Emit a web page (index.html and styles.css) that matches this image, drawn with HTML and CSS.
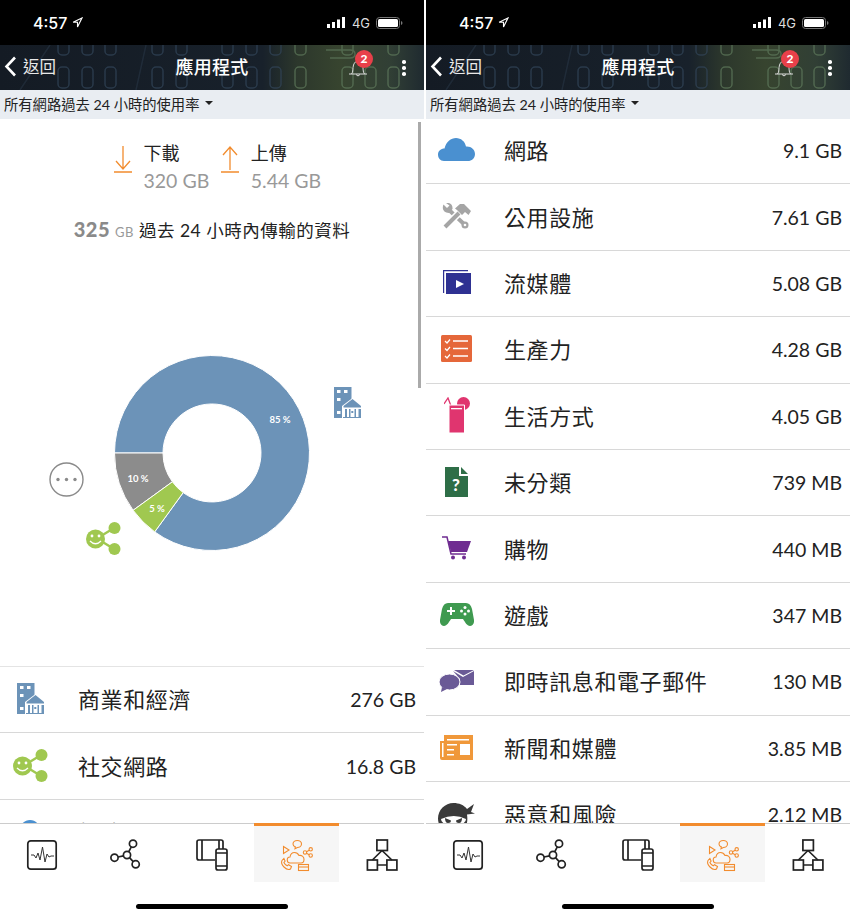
FILE: index.html
```html
<!DOCTYPE html>
<html lang="zh-Hant">
<head>
    <meta charset="UTF-8">
    <meta name="viewport" content="width=device-width, initial-scale=1.0">
    <title>應用程式</title>
    <link rel="stylesheet" href="styles.css">
</head>
<body>
    <!-- shared icons -->
    <svg class="sprite" xmlns="http://www.w3.org/2000/svg">
        <symbol id="circuit" viewBox="0 0 424 45">
            <g fill="none" stroke="#33465a" stroke-width="1.500" opacity=".7">
                <rect x="58" y="-10" width="11" height="20" rx="4"/><rect x="82" y="-10" width="11" height="20" rx="4"/><rect x="105" y="-10" width="11" height="20" rx="4"/>
                <rect x="58" y="22" width="11" height="21" rx="4"/><rect x="82" y="22" width="11" height="21" rx="4"/><rect x="105" y="22" width="11" height="21" rx="4"/>
                <rect x="152" y="-10" width="11" height="20" rx="4"/><rect x="176" y="-10" width="11" height="20" rx="4"/><rect x="222" y="-10" width="11" height="20" rx="4"/><rect x="246" y="-10" width="11" height="20" rx="4"/><rect x="270" y="-10" width="11" height="20" rx="4"/>
                <rect x="152" y="22" width="11" height="21" rx="4"/><rect x="176" y="22" width="11" height="21" rx="4"/><rect x="222" y="22" width="11" height="21" rx="4"/><rect x="246" y="22" width="11" height="21" rx="4"/><rect x="270" y="22" width="11" height="21" rx="4"/>
                <path d="M20 45l30-45M136 45l10-45" opacity=".5"/>
            </g>
            <g fill="none" stroke="#5f7a5c" stroke-width="1.500" opacity=".7">
                <rect x="295" y="-10" width="11" height="20" rx="4"/><rect x="342" y="-10" width="11" height="20" rx="4"/><rect x="388" y="-10" width="11" height="20" rx="4"/>
                <rect x="295" y="22" width="11" height="21" rx="4"/><rect x="342" y="22" width="11" height="21" rx="4"/><rect x="365" y="22" width="11" height="21" rx="4"/><rect x="388" y="22" width="11" height="21" rx="4"/>
                <path d="M326 5h24q5 0 5 4t-5 4h-20"/>
            </g>
        </symbol>
        <symbol id="ic-building" viewBox="0 0 28 31">
            <path fill="#6c93b8" d="M0 0h17.500v31H0z"/>
            <path fill="#fff" d="M3 3h3.500v3H3zM10 3h3.500v3H10zM3 11h3.500v3H3zM3 24h3.500v3H3z"/>
            <path fill="#fff" d="M8 31V19l10.500-8L28 19v12z"/>
            <path fill="#6c93b8" d="M9.500 19l9-7 8.500 7v1.500H9.500zM11 22h2v8h-2zM15 22h1.500v8H15zM20.500 22H22v8h-1.500zM24.500 22H27v8h-2.500zM9 30h18v1H9z"/>
            <path fill="#6c93b8" d="M17.300 24h2v2h-2z"/>
        </symbol>
        <symbol id="ic-social" viewBox="0 0 35 35">
            <path stroke="#a0c850" stroke-width="2.400" d="M28 7L15 15M28 28L15 20"/>
            <circle cx="9.500" cy="18" r="9.500" fill="#a0c850"/>
            <circle cx="28.500" cy="7" r="6" fill="#a0c850"/>
            <circle cx="28.500" cy="28" r="6" fill="#a0c850"/>
            <circle cx="6" cy="15" r="1.400" fill="#fff"/>
            <circle cx="13" cy="15" r="1.400" fill="#fff"/>
            <path fill="none" stroke="#fff" stroke-width="1.300" d="M4 20q5.500 5.500 11 0"/>
        </symbol>
        <symbol id="ic-cloud" viewBox="0 0 37 23">
            <path fill="#4a90d0" d="M6 23C2 23 0 20 0 16.500 0 13 3 10.500 6.500 10.500 8 4 13 0 18 0c5 0 9 3.500 10 8.500 5-.5 9 3 9 7.500s-3.500 7-7 7z"/>
        </symbol>
        <symbol id="ic-tools" viewBox="0 0 29 26">
            <path fill="none" stroke="#a5a5a5" stroke-width="4" d="M6 6l17 16"/>
            <path fill="#a5a5a5" d="M1.500 1.500L5 5l2.500-2.500L4 0C8-1 11 2 10.500 6L7 10C2 10-.5 6 1.500 1.500z"/>
            <circle cx="23" cy="22" r="3.500" fill="#a5a5a5"/>
            <circle cx="23" cy="22" r="1.300" fill="#fff"/>
            <path fill="none" stroke="#fff" stroke-width="7" d="M4 23L17 10"/>
            <path fill="none" stroke="#a5a5a5" stroke-width="4" d="M3 24L17 10"/>
            <path fill="#a5a5a5" d="M13 5.500L18 1h4l7 7-2.500 4-3.500-3-3 3-5-5z"/>
        </symbol>
        <symbol id="ic-media" viewBox="0 0 28 24">
            <path fill="none" stroke="#2e3192" stroke-width="1.200" d="M.6 23V.6h24.400"/>
            <path fill="#2e3192" d="M3 3h25v21H3z"/>
            <path fill="#fff" d="M13 10l8 4-8 4z"/>
        </symbol>
        <symbol id="ic-tasks" viewBox="0 0 31 27">
            <rect width="31" height="27" rx="1.500" fill="#e5673a"/>
            <path fill="none" stroke="#fff" stroke-width="1.500" d="M12 6h15M12 13.500h15M12 21h15"/>
            <path fill="none" stroke="#fff" stroke-width="1.200" d="M4 6l2 2 3-3.500M4 13.500l2 2 3-3.500M4 21l2 2 3-3.500"/>
        </symbol>
        <symbol id="ic-drink" viewBox="0 0 26 36">
            <circle cx="19.500" cy="6.500" r="6.500" fill="#e0356f"/>
            <path fill="none" stroke="#e0356f" stroke-width="1.300" d="M0 7l4-6 3 8"/>
            <path fill="#e0356f" stroke="#fff" d="M5 8h15.500v28H5z"/>
            <path fill="#fff" d="M7 11h11v1.300H7z"/>
        </symbol>
        <symbol id="ic-file" viewBox="0 0 23 30">
            <path fill="#2e6e47" d="M0 0h14v9h9v21H0zM16 0l7 7h-7z"/>
            <text x="11" y="24" text-anchor="middle" class="ic-q">?</text>
        </symbol>
        <symbol id="ic-cart" viewBox="0 0 29 24">
            <path fill="none" stroke="#6f2c91" stroke-width="1.500" d="M0 1h5l4 17h15"/>
            <path fill="#6f2c91" d="M6 5h23l-4 11H9z"/>
            <circle cx="11" cy="21.500" r="2" fill="#6f2c91"/>
            <circle cx="22" cy="21.500" r="2" fill="#6f2c91"/>
        </symbol>
        <symbol id="ic-pad" viewBox="0 0 34 23">
            <path fill="#3f9a50" d="M8 0h18c3 0 5 2 6 6l2 11c.5 4-2 6-4 6-3 0-5-4-7-7H11c-2 3-4 7-7 7-2 0-4.500-2-4-6L2 6c1-4 3-6 6-6z"/>
            <path fill="#fff" d="M7 7h3V4h2v3h3v2h-3v3h-2V9H7z"/>
            <circle cx="25" cy="4.500" r="1.500" fill="#fff"/>
            <circle cx="25" cy="11" r="1.500" fill="#fff"/>
            <circle cx="21.500" cy="8" r="1.500" fill="#fff"/>
            <circle cx="28.500" cy="8" r="1.500" fill="#fff"/>
        </symbol>
        <symbol id="ic-chat" viewBox="0 0 35 22">
            <path fill="#6a5a96" d="M14 1l10 6 11-6v14H21V9zM15 0h20L24.500 5.500z"/>
            <ellipse cx="10.500" cy="12" rx="10.500" ry="8" fill="#6a5a96" stroke="#fff"/>
            <path fill="#6a5a96" d="M3 17l-1 5 6-3z"/>
        </symbol>
        <symbol id="ic-news" viewBox="0 0 33 25">
            <path fill="#f0983a" d="M0 6h4V0h29v25H2q-2 0-2-2z"/>
            <path fill="#fff" d="M7 4h22v1.500H7zM7 9h10v1.500H7zM7 14h7v1.500H7zM7 19h7v1.500H7zM20 9h10v11H20z"/>
            <path fill="#fff" d="M2 8h1.500v14H2z"/>
        </symbol>
        <symbol id="ic-ninja" viewBox="0 0 37 32">
            <path fill="#3a3a3a" d="M15.500 0C21 0 26 2 29 6l7-5-3 8 4 1.500-8 1C31 24 24 32 15.500 32 7 32 0 24 0 15.500 0 7 7 0 15.500 0z"/>
            <path fill="#fff" d="M3 16q13-6 25 0 0 6-12.500 6T3 16z"/>
            <path fill="#3a3a3a" d="M7 15l6 2.500q0 2.500-3 2.500t-3-5zM24 15l-6 2.500q0 2.500 3 2.500t3-5z"/>
        </symbol>
        <symbol id="ic-more" viewBox="0 0 35 35">
            <circle cx="17.500" cy="17.500" r="16.500" fill="none" stroke="#8a8a8a" stroke-width="1.400"/>
            <circle cx="9" cy="17.500" r="1.700" fill="#8a8a8a"/>
            <circle cx="17.500" cy="17.500" r="1.700" fill="#8a8a8a"/>
            <circle cx="26" cy="17.500" r="1.700" fill="#8a8a8a"/>
        </symbol>
        <symbol id="tab-pulse" viewBox="0 0 40 40">
            <rect x="5.800" y="5.800" width="28.400" height="28.400" rx="3" fill="none" stroke="#222" stroke-width="1.700"/>
            <path fill="none" stroke="#333" d="M9 20h3l2 3 2-5 2 7 2.500-13 2.500 15 2-8 2 3 2-1h3"/>
        </symbol>
        <symbol id="tab-net" viewBox="0 0 40 40">
            <g fill="none" stroke="#222" stroke-width="1.700">
                <circle cx="20" cy="20" r="3.600"/><circle cx="26" cy="8.700" r="3.600"/><circle cx="7.500" cy="22.700" r="3.600"/><circle cx="28.700" cy="29.300" r="3.600"/>
                <path d="M21.700 16.800l2.600-5M11 22l5.500-1.200M22.500 22.700l3.700 4"/>
            </g>
        </symbol>
        <symbol id="tab-devices" viewBox="0 0 40 40">
            <g fill="none" stroke="#222" stroke-width="1.700">
                <path d="M23 25H7q-2 0-2-2V7q0-2 2-2h22q2 0 2 2v7M10 5v20M27 5v9"/>
                <rect x="24" y="14" width="11" height="21" rx="2"/>
                <path d="M24 18h11M24 31h11"/>
            </g>
        </symbol>
        <symbol id="tab-apps" viewBox="0 0 40 40">
            <g fill="none" stroke="#f28c2e" stroke-width="1.100">
                <path d="M15 28h-1.500a3 3 0 0 1-.5-6c.5-3 2-4.500 4.500-4.500 2 0 3.500 1 4.500 3 2.500-.5 5 1 5 3.750S25.500 28 24 28z"/>
                <path d="M6.500 11.500l5.500 3.500-5.500 3.500z"/>
                <path d="M16 9c0-2 2-3.500 4.300-3.500S24.500 7 24.500 9s-2 3.500-4.200 3.500l-2.300 1.300.3-1.900C17 11.500 16 10.300 16 9z"/>
                <circle cx="28" cy="17.500" r="1.700"/><circle cx="33.700" cy="14.300" r="1.700"/><circle cx="33.700" cy="20.500" r="1.700"/>
                <path d="M29.500 16.700l2.700-1.500M29.500 18.300l2.700 1.400"/>
                <path d="M5 25.500q-1.500 3 2 6.500t6.500 2l1-2.500-3-1.800-1.300 1.100q-2.300-1.200-3.300-3.300l1.200-1.300-1.200-2.800z"/>
                <rect x="21.500" y="29.500" width="10" height="6"/>
                <path d="M21.500 32h10"/>
            </g>
        </symbol>
        <symbol id="tab-tree" viewBox="0 0 40 40">
            <g fill="none" stroke="#222" stroke-width="1.700">
                <rect x="14.900" y="5" width="10.500" height="10.500"/><rect x="5.400" y="25" width="10" height="10"/><rect x="24.900" y="25" width="10" height="10"/>
                <path d="M20 15.500L10.400 25M20 15.500L29.900 25M15.400 30h9.500"/>
            </g>
        </symbol>
    </svg>

    <div class="screens">
        <!-- left phone -->
        <section class="phone">
            <div class="status">
                <span class="clock">4:57</span>
                <svg class="loc" viewBox="0 0 10 10"><path fill="none" stroke="#fff" d="M9 1L1 4.800h4V9z"/></svg>
                <span class="status-right">
                    <svg class="signal" viewBox="0 0 19 11"><path fill="#fff" d="M0 7h3v4H0zM5 5h3v6H5zM10 2.500h3V11h-3zM15 0h3v11h-3z"/></svg>
                    <span class="net">4G</span>
                    <svg class="battery" viewBox="0 0 27 12"><rect x=".5" y=".5" width="23" height="11" rx="3" fill="none" stroke="#777"/><rect x="2" y="2" width="20" height="8" rx="1.500" fill="#fff"/><path fill="#777" d="M25 4q1.500.5 1.500 2T25 8z"/></svg>
                </span>
            </div>
            <header class="navbar">
                <svg class="circuit"><use href="#circuit"/></svg>
                <a class="back">
                    <svg class="chevron" viewBox="0 0 13 21"><path fill="none" stroke="#fff" stroke-width="2.600" d="M11 1.500L2.500 10.500l8.500 9"/></svg>
                    返回
                </a>
                <h1 class="title">應用程式</h1>
                <span class="bell">
                    <svg class="bell-icon" viewBox="0 0 18 19"><path fill="none" stroke="#ddd" d="M0 16h18M2.500 16c2-2 1-6 2-9s3-4 4.500-4 3.500 1 4.500 4 0 7 2 9M7 16.500q2 3 4 0"/></svg>
                    <span class="badge">2</span>
                </span>
                <span class="dots"><i></i><i></i><i></i></span>
            </header>
            <div class="filter">所有網路過去 24 小時的使用率<span class="caret"></span></div>
            <main class="content">
                <div class="scrollbar"></div>
                <div class="stats">
                    <div class="stat">
                        <svg class="arrow" viewBox="0 0 18 28"><path fill="none" stroke="#f28c2e" stroke-width="1.300" d="M9 1v23M2 16l7 8 7-8M0 27h18"/></svg>
                        <div class="stat-text"><div class="stat-name">下載</div><div class="stat-val">320 GB</div></div>
                    </div>
                    <div class="stat">
                        <svg class="arrow" viewBox="0 0 18 28"><path fill="none" stroke="#f28c2e" stroke-width="1.300" d="M9 2v23M2 10l7-8 7 8M0 27h18"/></svg>
                        <div class="stat-text"><div class="stat-name">上傳</div><div class="stat-val">5.44 GB</div></div>
                    </div>
                </div>
                <p class="summary"><b>325</b> <small>GB</small> 過去 24 小時內傳輸的資料</p>
                <svg class="chart" viewBox="0 0 424 416">
                    <g transform="translate(212 203)" stroke="#fff">
                        <path fill="#6c93b8" d="M-97.500 0A97.500 97.500 0 1 1-57.300 78.900L-28.800 39.600A49 49 0 1 0-49 0z"/>
                        <path fill="#8c8c8c" d="M-97.500 0A97.500 97.500 0 0 0-78.900 57.300L-39.600 28.800A49 49 0 0 1-49 0z"/>
                        <path fill="#a0c850" d="M-78.900 57.300A97.500 97.500 0 0 0-57.300 78.900L-28.800 39.600A49 49 0 0 1-39.600 28.800z"/>
                    </g>
                    <g class="pct">
                        <text x="280" y="173">85 %</text>
                        <text x="138" y="232">10 %</text>
                        <text x="157" y="262">5 %</text>
                    </g>
                    <use href="#ic-building" x="334" y="137" width="28" height="31"/>
                    <use href="#ic-more" x="49" y="212" width="35" height="35"/>
                    <use href="#ic-social" x="86" y="271" width="35" height="35"/>
                </svg>
                <ul class="list list-top">
                    <li class="row"><span class="row-icon"><svg class="i-building"><use href="#ic-building"/></svg></span><span class="row-name">商業和經濟</span><span class="row-val">276 GB</span></li>
                    <li class="row"><span class="row-icon"><svg class="i-social"><use href="#ic-social"/></svg></span><span class="row-name">社交網路</span><span class="row-val">16.8 GB</span></li>
                    <li class="row"><span class="row-icon"><svg class="i-cloud"><use href="#ic-cloud"/></svg></span><span class="row-name">網路</span><span class="row-val">9.1 GB</span></li>
                </ul>
            </main>
            <nav class="tabs">
                <a class="tab"><svg><use href="#tab-pulse"/></svg></a>
                <a class="tab"><svg><use href="#tab-net"/></svg></a>
                <a class="tab"><svg><use href="#tab-devices"/></svg></a>
                <a class="tab active"><svg><use href="#tab-apps"/></svg></a>
                <a class="tab"><svg><use href="#tab-tree"/></svg></a>
            </nav>
            <div class="home"><span></span></div>
        </section>

        <!-- right phone -->
        <section class="phone">
            <div class="status">
                <span class="clock">4:57</span>
                <svg class="loc" viewBox="0 0 10 10"><path fill="none" stroke="#fff" d="M9 1L1 4.800h4V9z"/></svg>
                <span class="status-right">
                    <svg class="signal" viewBox="0 0 19 11"><path fill="#fff" d="M0 7h3v4H0zM5 5h3v6H5zM10 2.500h3V11h-3zM15 0h3v11h-3z"/></svg>
                    <span class="net">4G</span>
                    <svg class="battery" viewBox="0 0 27 12"><rect x=".5" y=".5" width="23" height="11" rx="3" fill="none" stroke="#777"/><rect x="2" y="2" width="20" height="8" rx="1.500" fill="#fff"/><path fill="#777" d="M25 4q1.500.5 1.500 2T25 8z"/></svg>
                </span>
            </div>
            <header class="navbar">
                <svg class="circuit"><use href="#circuit"/></svg>
                <a class="back">
                    <svg class="chevron" viewBox="0 0 13 21"><path fill="none" stroke="#fff" stroke-width="2.600" d="M11 1.500L2.500 10.500l8.500 9"/></svg>
                    返回
                </a>
                <h1 class="title">應用程式</h1>
                <span class="bell">
                    <svg class="bell-icon" viewBox="0 0 18 19"><path fill="none" stroke="#ddd" d="M0 16h18M2.500 16c2-2 1-6 2-9s3-4 4.500-4 3.500 1 4.500 4 0 7 2 9M7 16.500q2 3 4 0"/></svg>
                    <span class="badge">2</span>
                </span>
                <span class="dots"><i></i><i></i><i></i></span>
            </header>
            <div class="filter">所有網路過去 24 小時的使用率<span class="caret"></span></div>
            <main class="content">
                <ul class="list list-full">
                    <li class="row"><span class="row-icon"><svg class="i-cloud"><use href="#ic-cloud"/></svg></span><span class="row-name">網路</span><span class="row-val">9.1 GB</span></li>
                    <li class="row"><span class="row-icon"><svg class="i-tools"><use href="#ic-tools"/></svg></span><span class="row-name">公用設施</span><span class="row-val">7.61 GB</span></li>
                    <li class="row"><span class="row-icon"><svg class="i-media"><use href="#ic-media"/></svg></span><span class="row-name">流媒體</span><span class="row-val">5.08 GB</span></li>
                    <li class="row"><span class="row-icon"><svg class="i-tasks"><use href="#ic-tasks"/></svg></span><span class="row-name">生產力</span><span class="row-val">4.28 GB</span></li>
                    <li class="row"><span class="row-icon"><svg class="i-drink"><use href="#ic-drink"/></svg></span><span class="row-name">生活方式</span><span class="row-val">4.05 GB</span></li>
                    <li class="row"><span class="row-icon"><svg class="i-file"><use href="#ic-file"/></svg></span><span class="row-name">未分類</span><span class="row-val">739 MB</span></li>
                    <li class="row"><span class="row-icon"><svg class="i-cart"><use href="#ic-cart"/></svg></span><span class="row-name">購物</span><span class="row-val">440 MB</span></li>
                    <li class="row"><span class="row-icon"><svg class="i-pad"><use href="#ic-pad"/></svg></span><span class="row-name">遊戲</span><span class="row-val">347 MB</span></li>
                    <li class="row"><span class="row-icon"><svg class="i-chat"><use href="#ic-chat"/></svg></span><span class="row-name">即時訊息和電子郵件</span><span class="row-val">130 MB</span></li>
                    <li class="row"><span class="row-icon"><svg class="i-news"><use href="#ic-news"/></svg></span><span class="row-name">新聞和媒體</span><span class="row-val">3.85 MB</span></li>
                    <li class="row"><span class="row-icon"><svg class="i-ninja"><use href="#ic-ninja"/></svg></span><span class="row-name">惡意和風險</span><span class="row-val">2.12 MB</span></li>
                </ul>
            </main>
            <nav class="tabs">
                <a class="tab"><svg><use href="#tab-pulse"/></svg></a>
                <a class="tab"><svg><use href="#tab-net"/></svg></a>
                <a class="tab"><svg><use href="#tab-devices"/></svg></a>
                <a class="tab active"><svg><use href="#tab-apps"/></svg></a>
                <a class="tab"><svg><use href="#tab-tree"/></svg></a>
            </nav>
            <div class="home"><span></span></div>
        </section>
    </div>
</body>
</html>
```

FILE: styles.css
```css
* {
    box-sizing: border-box;
}
body {
    margin: 0;
    background: #fff;
    color: #222;
    font-family: Lato, "Noto Sans CJK TC", sans-serif;
}
.sprite {
    display: none;
}
.screens {
    display: flex;
    justify-content: space-between;
    width: 850px;
    height: 917px;
    overflow: hidden;
}
.phone {
    display: flex;
    flex-direction: column;
    width: 424px;
    height: 917px;
    background: #fff;
}

/* status bar */
.status {
    display: flex;
    align-items: center;
    height: 45px;
    padding: 0 21px 0 33px;
    background: #000;
    color: #fff;
}
.clock {
    font-family: Inter, sans-serif;
    font-size: 16px;
    font-weight: 500;
}
.loc {
    width: 11px;
    height: 11px;
    margin-left: 5px;
}
.status-right {
    display: flex;
    align-items: center;
    margin-left: auto;
}
.signal {
    width: 19px;
    height: 11px;
}
.net {
    margin: 0 6px;
    font-family: Inter, sans-serif;
    font-size: 13px;
    color: #ddd;
}
.battery {
    width: 27px;
    height: 12px;
}

/* nav bar */
.navbar {
    position: relative;
    display: flex;
    align-items: center;
    height: 45px;
    padding: 0 4px;
    overflow: hidden;
    background: linear-gradient(90deg, #141b24 0, #18212b 62%, #2c372c 70%, #37442f 80%, #313f35 92%, #1f2a30 100%);
    color: #fff;
}
.circuit {
    position: absolute;
    top: 0;
    left: 0;
    width: 424px;
    height: 45px;
    filter: blur(.5px);
}
.back {
    position: relative;
    display: flex;
    align-items: center;
    gap: 6px;
    margin-top: -3px;
    font-size: 16.500px;
    color: #e8e8e8;
}
.chevron {
    width: 13px;
    height: 21px;
}
.title {
    position: absolute;
    top: 0;
    left: 0;
    width: 100%;
    margin: 0;
    font-size: 18px;
    font-weight: 500;
    line-height: 44px;
    text-align: center;
    letter-spacing: .3px;
}
.bell {
    position: absolute;
    top: 13px;
    left: 349px;
}
.bell-icon {
    display: block;
    width: 18px;
    height: 19px;
}
.badge {
    position: absolute;
    top: -8px;
    left: 6px;
    width: 18px;
    height: 18px;
    border-radius: 50%;
    background: #e8404a;
    font-size: 12px;
    font-weight: 900;
    line-height: 18px;
    text-align: center;
}
.dots {
    position: absolute;
    top: 15px;
    left: 402px;
    display: flex;
    flex-direction: column;
    gap: 2.500px;
}
.dots i {
    width: 3.500px;
    height: 3.500px;
    border-radius: 50%;
    background: #fff;
}

/* filter */
.filter {
    display: flex;
    align-items: center;
    height: 29px;
    padding: 0 0 2px 4px;
    background: #e9edf2;
    font-size: 14.300px;
}
.caret {
    width: 0;
    height: 0;
    margin-left: 6px;
    margin-bottom: 2px;
    border-top: 4px solid #222;
    border-left: 4px solid transparent;
    border-right: 4px solid transparent;
}

/* content */
.content {
    position: relative;
    flex: 1;
    min-height: 0;
    overflow: hidden;
}
.scrollbar {
    position: absolute;
    top: 3px;
    right: 3px;
    width: 3px;
    height: 266px;
    background: #aaa;
}
.stats {
    display: flex;
    gap: 12px;
    padding: 20px 0 0 114px;
}
.stat {
    display: flex;
    gap: 11.500px;
}
.arrow {
    width: 18px;
    height: 28px;
    margin-top: 6px;
}
.stat-name {
    font-size: 18px;
    line-height: 28px;
}
.stat-val {
    font-size: 19.500px;
    line-height: 28px;
    color: #999;
}
.summary {
    height: 30px;
    margin: 19px 0 6px;
    font-size: 17.500px;
    line-height: 30px;
    letter-spacing: .5px;
    text-align: center;
}
.summary b {
    font-size: 20px;
    font-weight: 900;
    color: #8a8a8a;
}
.summary small {
    font-size: 13px;
    color: #999;
}
.chart {
    display: block;
    width: 424px;
    height: 416px;
}
.pct text {
    fill: #fff;
    font-size: 9.500px;
    font-weight: 700;
    text-anchor: middle;
}
.ic-q {
    fill: #fff;
    font-size: 17px;
    font-weight: 900;
}
.list {
    margin: 0;
    padding: 0;
    list-style: none;
}
.list-top {
    border-top: 1px solid #e4e4e4;
}
.list-full {
    margin-top: -1px;
}
.row {
    display: flex;
    align-items: center;
    height: 66.400px;
    padding-right: 8px;
    border-bottom: 1.500px solid #d8d8d8;
}
.row-icon {
    display: flex;
    justify-content: center;
    width: 61px;
    margin-right: 17px;
    margin-bottom: 2px;
}
.row-name {
    margin-bottom: 3px;
    font-size: 22px;
    letter-spacing: .6px;
}
.row-val {
    margin-left: auto;
    font-size: 19.500px;
}
.i-building { width: 28px; height: 31px; }
.i-social { width: 35px; height: 35px; }
.i-cloud { width: 37px; height: 23px; }
.i-tools { width: 29px; height: 26px; }
.i-media { width: 28px; height: 24px; }
.i-tasks { width: 31px; height: 27px; }
.i-drink { width: 26px; height: 36px; }
.i-file { width: 23px; height: 30px; }
.i-cart { width: 29px; height: 24px; }
.i-pad { width: 34px; height: 23px; }
.i-chat { width: 35px; height: 22px; }
.i-news { width: 33px; height: 25px; }
.i-ninja { width: 37px; height: 32px; margin-top: 10px; }

/* tabs */
.tabs {
    display: grid;
    grid-template-columns: repeat(5, 1fr);
    height: 59px;
    border-top: 1px solid #ccc;
}
.tab {
    display: flex;
    justify-content: center;
    padding-top: 11px;
}
.tab svg {
    width: 40px;
    height: 40px;
}
.tab.active {
    margin-top: -1px;
    padding-top: 9px;
    border-top: 3px solid #f28c2e;
    background: #f6f6f6;
}
.home {
    display: flex;
    justify-content: center;
    height: 35px;
    padding-top: 22px;
}
.home span {
    width: 152px;
    height: 5px;
    border-radius: 3px;
    background: #000;
}
```
